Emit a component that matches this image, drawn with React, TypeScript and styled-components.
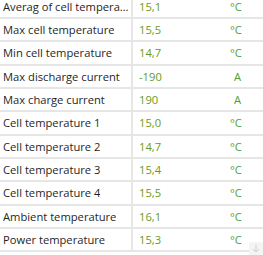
import React from 'react';
import styled, { createGlobalStyle } from 'styled-components';

const GlobalStyle = createGlobalStyle`
  html, body {
    margin: 0;
    padding: 0;
    background: #ffffff;
  }
  body {
    font-family: 'Open Sans', 'Noto Sans', 'Liberation Sans', sans-serif;
  }
`;

const Viewport = styled.div`
  position: relative;
  width: 263px;
  height: 255px;
  overflow: hidden;
  background: #ffffff;
`;

const List = styled.div`
  margin-top: -4.33px;
  display: flex;
  flex-direction: column;
`;

const Row = styled.div`
  display: grid;
  grid-template-columns: 133px 1fr 44px;
  height: 23.33px;
  box-sizing: border-box;
  border-bottom: 2px solid #e6e6e6;
  font-size: 11.2px;
  line-height: 1.35;
`;

const Cell = styled.div`
  display: flex;
  align-items: center;
  min-width: 0;
  white-space: nowrap;
`;

const Label = styled(Cell)`
  padding-left: 3px;
  border-right: 2px solid #e6e6e6;
  color: #1f1f1f;
`;

const LabelText = styled.span`
  overflow: hidden;
  text-overflow: ellipsis;
  max-width: 127px;
`;

const Value = styled(Cell)`
  padding-left: 6px;
  color: #6a9a22;
`;

const Unit = styled(Cell)<{ $narrow?: boolean }>`
  padding-left: ${({ $narrow }) => ($narrow ? '15px' : '11px')};
  color: #4f9e36;
`;

const ScrollArrow = styled.div`
  position: absolute;
  right: 0;
  bottom: 0;
  width: 14px;
  height: 13px;
  background: #f4f4f4;
  display: flex;
  align-items: center;
  justify-content: center;
`;

const rows: { label: string; value: string; unit: string }[] = [
  { label: 'Averag of cell temperature', value: '15,1', unit: '°C' },
  { label: 'Max cell temperature', value: '15,5', unit: '°C' },
  { label: 'Min cell temperature', value: '14,7', unit: '°C' },
  { label: 'Max discharge current', value: '-190', unit: 'A' },
  { label: 'Max charge current', value: '190', unit: 'A' },
  { label: 'Cell temperature 1', value: '15,0', unit: '°C' },
  { label: 'Cell temperature 2', value: '14,7', unit: '°C' },
  { label: 'Cell temperature 3', value: '15,4', unit: '°C' },
  { label: 'Cell temperature 4', value: '15,5', unit: '°C' },
  { label: 'Ambient temperature', value: '16,1', unit: '°C' },
  { label: 'Power temperature', value: '15,3', unit: '°C' },
];

export default function App() {
  return (
    <>
      <GlobalStyle />
      <Viewport>
        <List>
          {rows.map((r) => (
            <Row key={r.label}>
              <Label>
                <LabelText>{r.label}</LabelText>
              </Label>
              <Value>{r.value}</Value>
              <Unit $narrow={r.unit === 'A'}>{r.unit}</Unit>
            </Row>
          ))}
        </List>
        <ScrollArrow>
          <svg width="8" height="9" viewBox="0 0 8 9">
            <path d="M4 0.5V8M1 5l3 3 3-3" fill="none" stroke="#cfcfcf" strokeWidth="1" />
          </svg>
        </ScrollArrow>
      </Viewport>
    </>
  );
}
